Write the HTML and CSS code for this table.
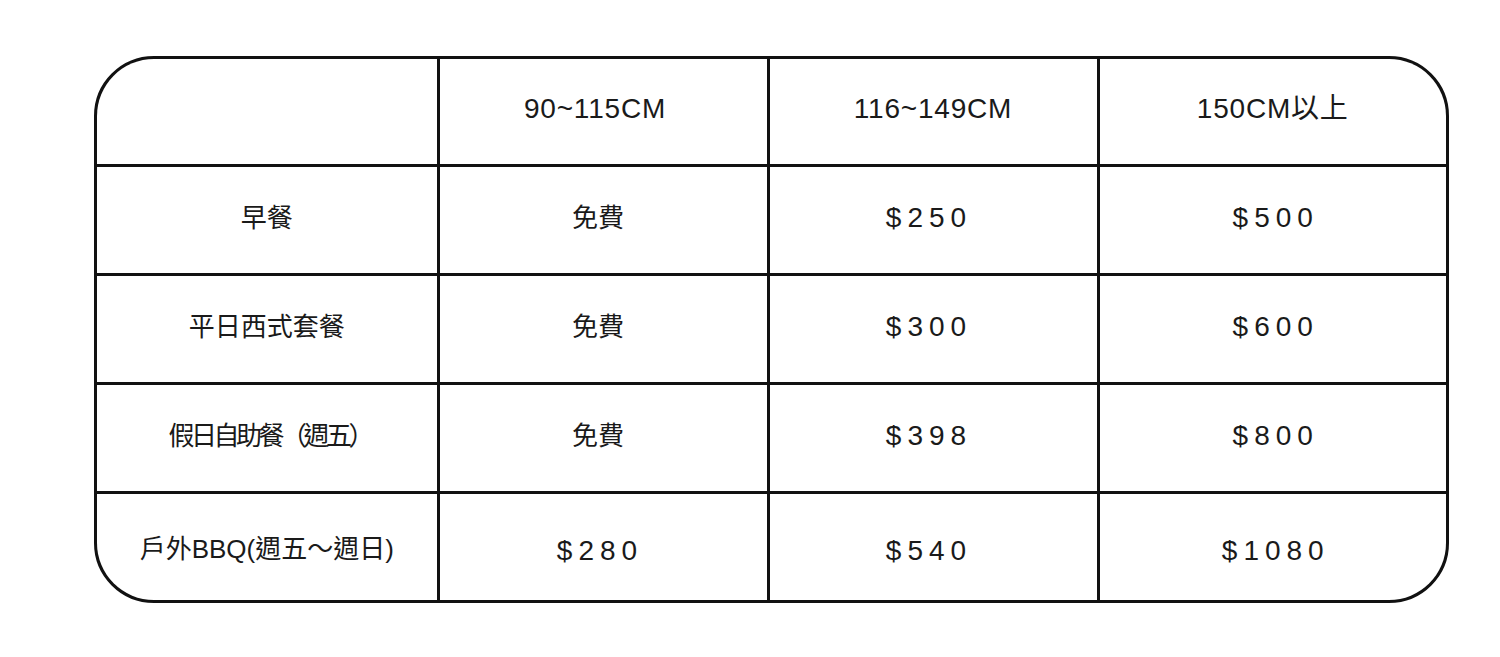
FILE: index.html
```html
<!DOCTYPE html>
<html lang="zh-Hant">
<head>
<meta charset="utf-8">
<title>價目表</title>
<link rel="stylesheet" href="styles.css">
</head>
<body>
<div class="frame">
  <div class="table">
    <div class="cell"></div>
    <div class="cell head c2">90~115CM</div>
    <div class="cell head">116~149CM</div>
    <div class="cell head">150CM以上</div>

    <div class="cell label">早餐</div>
    <div class="cell label c2">免費</div>
    <div class="cell price c3">$250</div>
    <div class="cell price">$500</div>

    <div class="cell label">平日西式套餐</div>
    <div class="cell label c2">免費</div>
    <div class="cell price c3">$300</div>
    <div class="cell price">$600</div>

    <div class="cell label narrow">假日自助餐（週五）</div>
    <div class="cell label c2">免費</div>
    <div class="cell price c3">$398</div>
    <div class="cell price">$800</div>

    <div class="cell label mixed last">戶外BBQ(週五～週日)</div>
    <div class="cell price c2 last">$280</div>
    <div class="cell price c3 last">$540</div>
    <div class="cell price last">$1080</div>
  </div>
</div>
</body>
</html>
```

FILE: styles.css
```css
html, body {
  margin: 0;
  padding: 0;
  background: #ffffff;
}

body {
  font-family: "Liberation Sans", "Noto Sans CJK TC", sans-serif;
  color: #1a1a1a;
}

.frame {
  padding: 56px 0 0 94px;
}

.table {
  width: 1355px;
  height: 547px;
  box-sizing: border-box;
  border: 3px solid #111;
  border-radius: 60px;
  overflow: hidden;
  background: #111;
  display: grid;
  grid-template-columns: 339.5px 327px 327px 346.5px;
  grid-template-rows: 105px 106px 106px 106px 106px;
  gap: 3px;
}

.cell {
  background: #fff;
  display: flex;
  align-items: center;
  justify-content: center;
  padding-bottom: 4px;
  box-sizing: border-box;
  white-space: nowrap;
  line-height: 1.1;
}

.head {
  font-size: 28px;
  letter-spacing: 0.8px;
}

.label {
  font-size: 26px;
}

.narrow {
  letter-spacing: -3.5px;
  padding-left: 6px;
}

.mixed {
  font-size: 26px;
  letter-spacing: 0;
}

.price {
  font-size: 28px;
  letter-spacing: 6px;
  padding-left: 6px;
}

.head.c2 {
  padding-right: 16px;
}

.label.c2 {
  padding-right: 10px;
}

.price.c2 {
  padding-left: 0;
  padding-right: 6px;
}

.price.c3 {
  padding-left: 0;
  padding-right: 8px;
}

.cell.last {
  padding-bottom: 0;
  padding-top: 8px;
}

.label.last {
  padding-top: 4px;
}
```
